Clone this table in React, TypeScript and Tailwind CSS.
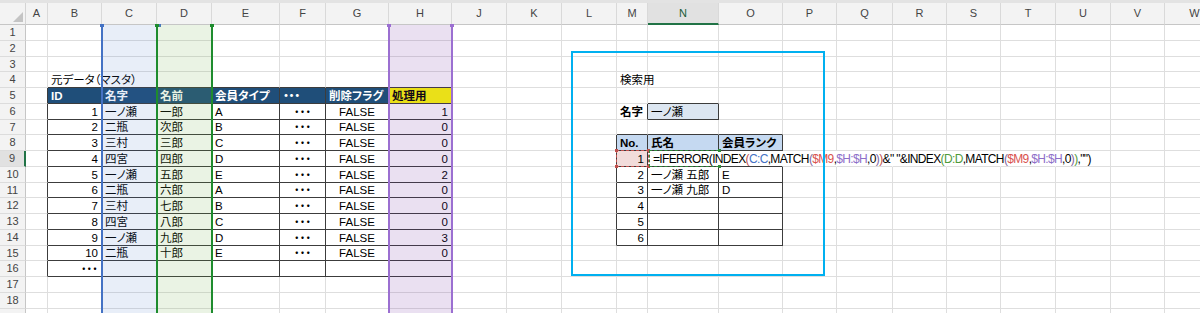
import clsx from "clsx";
import type { ReactNode } from "react";

type Col = { k: string; w: string };

// column widths measured off the sheet (I is hidden)
const COLS: Col[] = [
  { k: "A", w: "w-[22px]" },
  { k: "B", w: "w-[54px]" },
  { k: "C", w: "w-[55px]" },
  { k: "D", w: "w-[55px]" },
  { k: "E", w: "w-[68px]" },
  { k: "F", w: "w-[46px]" },
  { k: "G", w: "w-[63px]" },
  { k: "H", w: "w-[63px]" },
  { k: "J", w: "w-[55px]" },
  { k: "K", w: "w-[55px]" },
  { k: "L", w: "w-[55px]" },
  { k: "M", w: "w-[31px]" },
  { k: "N", w: "w-[71px]" },
  { k: "O", w: "w-[64px]" },
  { k: "P", w: "w-[54px]" },
  { k: "Q", w: "w-[56px]" },
  { k: "R", w: "w-[54px]" },
  { k: "S", w: "w-[54px]" },
  { k: "T", w: "w-[55px]" },
  { k: "U", w: "w-[55px]" },
  { k: "V", w: "w-[54px]" },
  { k: "W", w: "w-[60px]" },
];
const ORDER = COLS.map((c) => c.k);
const ROWS = Array.from({ length: 19 }, (_, i) => i + 1);

type Spec = { t?: ReactNode; a?: "l" | "r" | "c"; cls?: string };

const HEAD = "bg-[#1f4e79] text-white font-bold";
const SUB = "bg-[#c5d9f1] font-bold";

const master: [number, string, string, string, number][] = [
  [1, "一ノ瀬", "一郎", "A", 1],
  [2, "二瓶", "次郎", "B", 0],
  [3, "三村", "三郎", "C", 0],
  [4, "四宮", "四郎", "D", 0],
  [5, "一ノ瀬", "五郎", "E", 2],
  [6, "二瓶", "六郎", "A", 0],
  [7, "三村", "七郎", "B", 0],
  [8, "四宮", "八郎", "C", 0],
  [9, "一ノ瀬", "九郎", "D", 3],
  [10, "二瓶", "十郎", "E", 0],
];

const DOTS = "・・・";

function Formula() {
  return (
    <span className="ml-[2px] text-[12px] tracking-[-0.65px]">
      {"=IFERROR(INDEX"}
      <span className="text-[#c0504d]">(</span>
      <span className="text-[#4472c4]">C:C</span>
      {",MATCH"}
      <span className="text-[#8064a2]">(</span>
      <span className="text-[#d9534f]">$M9</span>
      {","}
      <span className="text-[#8e6fc9]">$H:$H</span>
      {",0"}
      <span className="text-[#8064a2]">)</span>
      <span className="text-[#c0504d]">)</span>
      {'&" "&INDEX'}
      <span className="text-[#4f9a3a]">(</span>
      <span className="text-[#4f9a3a]">D:D</span>
      {",MATCH"}
      <span className="text-[#8064a2]">(</span>
      <span className="text-[#d9534f]">$M9</span>
      {","}
      <span className="text-[#8e6fc9]">$H:$H</span>
      {",0"}
      <span className="text-[#8064a2]">)</span>
      <span className="text-[#4f9a3a]">)</span>
      {',"")'}
    </span>
  );
}

const CELLS: Record<string, Spec> = {
  B4: { t: "元データ（マスタ）" },
  B5: { t: "ID", cls: HEAD },
  C5: { t: "名字", cls: HEAD },
  D5: { t: "名前", cls: HEAD },
  E5: { t: "会員タイプ", cls: HEAD },
  F5: { t: DOTS, cls: HEAD },
  G5: { t: "削除フラグ", cls: HEAD },
  H5: { t: "処理用", cls: "bg-[#ffff00] font-bold" },
  B16: { t: DOTS, a: "r" },
  M4: { t: "検索用" },
  M6: { t: "名字", cls: "font-bold" },
  N6: { t: "一ノ瀬", cls: "bg-[#dce6f1]" },
  M8: { t: "No.", cls: SUB },
  N8: { t: "氏名", cls: SUB },
  O8: { t: "会員ランク", cls: SUB },
  M9: { t: "1", a: "r", cls: "bg-[#f2dcdb]" },
  N9: { t: <Formula /> },
  M10: { t: "2", a: "r" },
  N10: { t: "一ノ瀬 五郎" },
  O10: { t: "E" },
  M11: { t: "3", a: "r" },
  N11: { t: "一ノ瀬 九郎" },
  O11: { t: "D" },
  M12: { t: "4", a: "r" },
  M13: { t: "5", a: "r" },
  M14: { t: "6", a: "r" },
};

master.forEach(([id, sei, mei, type, flag], i) => {
  const r = 6 + i;
  CELLS["B" + r] = { t: String(id), a: "r" };
  CELLS["C" + r] = { t: sei };
  CELLS["D" + r] = { t: mei };
  CELLS["E" + r] = { t: type };
  CELLS["F" + r] = { t: DOTS, a: "c" };
  CELLS["G" + r] = { t: "FALSE", a: "c" };
  CELLS["H" + r] = { t: String(flag), a: "r" };
});

function between(k: string, from: string, to: string) {
  const i = ORDER.indexOf(k);
  return i >= ORDER.indexOf(from) && i <= ORDER.indexOf(to);
}

function inTable(k: string, r: number) {
  if (between(k, "B", "H") && r >= 5 && r <= 16) return true;
  if (between(k, "M", "O") && r >= 8 && r <= 14) return true;
  return k === "N" && r === 6;
}

function Cell({ col, r }: { col: Col; r: number }) {
  const s = CELLS[col.k + r] ?? {};
  const next = ORDER[ORDER.indexOf(col.k) + 1];
  // the formula in N9 runs over the cells to its right
  const hideR = r === 9 && between(col.k, "N", "T");
  const darkR = inTable(col.k, r) || (next ? inTable(next, r) : false);
  const darkB = inTable(col.k, r) || inTable(col.k, r + 1);
  return (
    <div
      className={clsx(
        "flex shrink-0 items-end whitespace-nowrap border-r border-b px-[3px] leading-[14px]",
        col.w,
        hideR ? "border-r-transparent" : darkR ? "border-r-[#3c3c3c]" : "border-r-[#dedede]",
        darkB ? "border-b-[#3c3c3c]" : "border-b-[#dedede]",
        s.a === "r" ? "justify-end" : s.a === "c" ? "justify-center" : "justify-start",
        s.cls,
      )}
    >
      {s.t}
    </div>
  );
}

function Row({ r }: { r: number }) {
  return (
    <div className="flex h-[15.75px]">
      <div
        className={clsx(
          "flex w-[26px] shrink-0 items-center justify-center border-b border-b-[#dcdcdc] text-[11px] text-[#444]",
          r === 9 ? "border-r-2 border-r-[#217346] bg-[#e1e1e1]" : "border-r border-r-[#c6c6c6] bg-[#f3f3f3]",
        )}
      >
        {r < 19 ? r : ""}
      </div>
      {COLS.map((c) => (
        <Cell key={c.k} col={c} r={r} />
      ))}
    </div>
  );
}

function Corner() {
  return (
    <div className="flex w-[26px] shrink-0 items-end justify-end border-r border-b border-r-[#d4d4d4] border-b-[#c6c6c6] pr-[2px] pb-[2px]">
      <svg width="10" height="10" viewBox="0 0 10 10">
        <path d="M10 0 L10 10 L0 10 Z" fill="#c4c4c4" />
      </svg>
    </div>
  );
}

// a drawn column marker: tinted band between two lines, with handles at the top
function Band({ pos, line, tint, handle }: { pos: string; line: string; tint: string; handle: string }) {
  return (
    <div className={clsx("pointer-events-none absolute top-[25px] bottom-0", pos, line, tint)}>
      <div className={clsx("absolute -top-px -left-[3px] h-[3px] w-[4px]", handle)} />
      <div className={clsx("absolute -top-px -right-[3px] h-[3px] w-[4px]", handle)} />
    </div>
  );
}

export default function App() {
  return (
    <div className="relative h-[313px] w-[1200px] overflow-hidden bg-white font-['Liberation_Sans','Noto_Sans_CJK_JP',sans-serif] text-[11.5px] text-black [font-feature-settings:'palt']">
      <div className="h-[3px] bg-[#e3e3e3]" />
      <div className="flex h-[22px] bg-[#f3f3f3]">
        <Corner />
        {COLS.map((c) => (
          <div
            key={c.k}
            className={clsx(
              "flex shrink-0 items-center justify-center border-r border-r-[#d9d9d9] text-[11px]",
              c.w,
              c.k === "N"
                ? "border-b-2 border-b-[#217346] bg-[#e1e1e1] text-[#185c37]"
                : "border-b border-b-[#c6c6c6] text-[#444]",
            )}
          >
            {c.k}
          </div>
        ))}
      </div>
      {ROWS.map((r) => (
        <Row key={r} r={r} />
      ))}

      {/* column markers drawn as shapes over the grid */}
      <Band pos="left-[101px] w-[57px]" line="border-l-2 border-l-[#4472c4]" tint="bg-[#4472c4]/[0.12]" handle="bg-[#4472c4]" />
      <Band pos="left-[156px] w-[57px]" line="border-x-2 border-x-[#1e8c2e]" tint="bg-[#70ad47]/[0.15]" handle="bg-[#1e8c2e]" />
      <Band pos="left-[388px] w-[65px]" line="border-x-2 border-x-[#9b6fd1]" tint="bg-[#7030a0]/[0.15]" handle="bg-[#9b6fd1]" />

      {/* reference highlights while editing N9 */}
      <div className="pointer-events-none absolute top-[150px] left-[616px] h-[17px] w-[33px] border border-dashed border-[#c0504d]">
        <div className="absolute -top-[2px] -left-[2px] h-[3px] w-[3px] bg-[#c0504d]" />
        <div className="absolute -top-[2px] -right-[2px] h-[3px] w-[3px] bg-[#c0504d]" />
        <div className="absolute -bottom-[2px] -left-[2px] h-[3px] w-[3px] bg-[#c0504d]" />
        <div className="absolute -right-[2px] -bottom-[2px] h-[3px] w-[3px] bg-[#c0504d]" />
      </div>
      <div className="pointer-events-none absolute top-[150px] left-[649px] h-[17px] w-[70px] border-y border-l border-dashed border-[#2e8b3a]">
        <div className="absolute -top-[2px] -right-[2px] h-[3px] w-[3px] bg-[#2e8b3a]" />
        <div className="absolute -right-[2px] -bottom-[2px] h-[3px] w-[3px] bg-[#2e8b3a]" />
      </div>

      {/* search area frame */}
      <div className="pointer-events-none absolute top-[51px] left-[571px] h-[225px] w-[254px] border-2 border-[#00b0f0]" />
    </div>
  );
}
